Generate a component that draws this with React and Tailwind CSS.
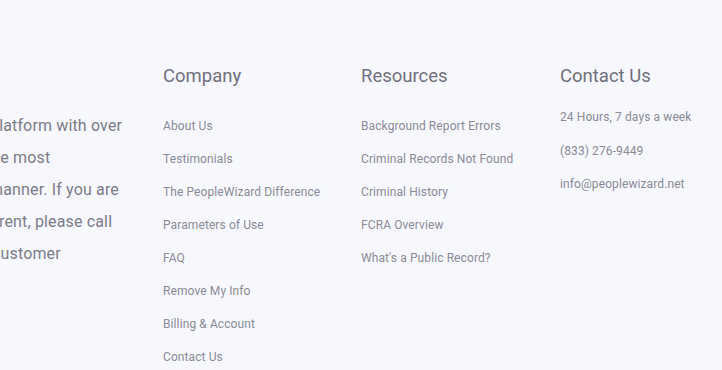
export default function App() {
  const company = [
    "About Us",
    "Testimonials",
    "The PeopleWizard Difference",
    "Parameters of Use",
    "FAQ",
    "Remove My Info",
    "Billing & Account",
    "Contact Us",
  ];
  const resources = [
    "Background Report Errors",
    "Criminal Records Not Found",
    "Criminal History",
    "FCRA Overview",
    "What's a Public Record?",
  ];
  const contact = ["24 Hours, 7 days a week", "(833) 276-9449", "info@peoplewizard.net"];
  return (
    <div className="w-full h-[370px] bg-[#f7f8fc] overflow-hidden font-['Roboto',sans-serif]">
      <div className="flex pt-[64px]">
        <div className="w-[163px] shrink-0 overflow-hidden pt-[46px]">
          <div className="text-[16px] leading-[32px] tracking-[0.15px] text-[#7b7b88] whitespace-nowrap">
            <div className="-ml-[10px]">platform with over</div>
            <div className="-ml-[14px]">the most</div>
            <div className="-ml-[11px]">manner. If you are</div>
            <div className="-ml-[24px]">current, please call</div>
            <div className="-ml-[8px]">customer</div>
          </div>
        </div>
        <div className="w-[198px] shrink-0">
          <h3 className="text-[18.5px] leading-[24px] font-normal text-[#6f6f7c]">Company</h3>
          <ul className="mt-[22px] text-[12px] leading-[33px] text-[#8a8a96] tracking-[0.1px]">
            {company.map((t) => (
              <li key={t}>{t}</li>
            ))}
          </ul>
        </div>
        <div className="w-[199px] shrink-0">
          <h3 className="text-[18.5px] leading-[24px] font-normal text-[#6f6f7c]">Resources</h3>
          <ul className="mt-[22px] text-[12px] leading-[33px] text-[#8a8a96] tracking-[0.1px]">
            {resources.map((t) => (
              <li key={t}>{t}</li>
            ))}
          </ul>
        </div>
        <div className="flex-1">
          <h3 className="text-[18.5px] leading-[24px] font-normal text-[#6f6f7c]">Contact Us</h3>
          <ul className="mt-[13px] text-[12px] leading-[33.5px] text-[#8a8a96] tracking-[0.1px]">
            {contact.map((t) => (
              <li key={t}>{t}</li>
            ))}
          </ul>
        </div>
      </div>
    </div>
  );
}
